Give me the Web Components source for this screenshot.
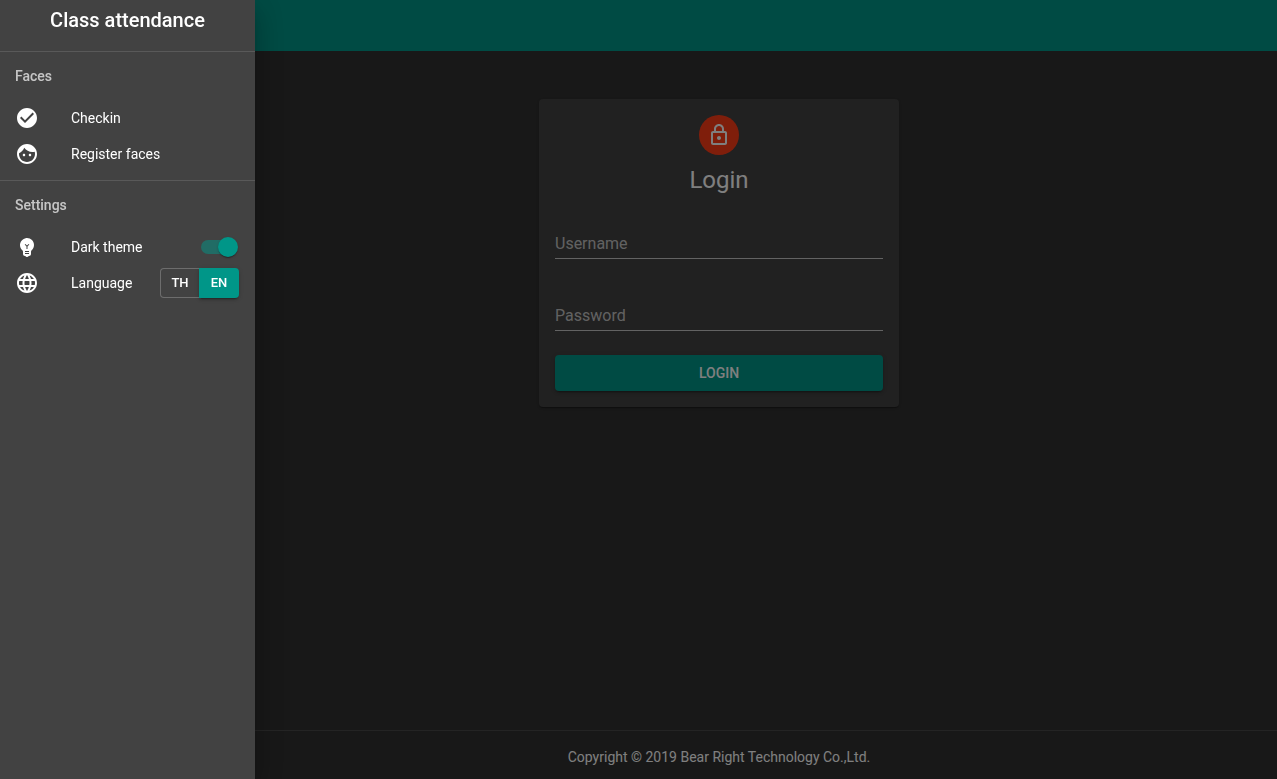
<!DOCTYPE html>
<html lang="en">
<head>
<meta charset="utf-8">
<meta name="viewport" content="width=device-width, initial-scale=1">
<title>Class attendance</title>
<style>
  html { height: 100%; }
  body {
    margin: 0;
    min-height: 100%;
    background: #303030;
    color: #fff;
    font: 400 14px/20px Roboto, "Liberation Sans", sans-serif;
    --primary: #009688;
    --paper: #424242;
    --muted: rgba(255, 255, 255, .7);
    --divider: rgba(255, 255, 255, .12);
  }
</style>
</head>
<body>
<attendance-app></attendance-app>

<script>
const define = (name, html, setup) => {
  const template = document.createElement('template');
  template.innerHTML = html;
  customElements.define(name, class extends HTMLElement {
    constructor() {
      super();
      this.attachShadow({ mode: 'open' }).append(template.content.cloneNode(true));
    }
    connectedCallback() { if (setup) setup(this, this.shadowRoot); }
  });
};

const ICONS = {
  check: 'M12 2C6.48 2 2 6.48 2 12s4.48 10 10 10 10-4.48 10-10S17.52 2 12 2zm-2 15l-5-5 1.41-1.41L10 14.17l7.59-7.59L19 8l-9 9z',
  face: 'M9 11.75c-.69 0-1.25.56-1.25 1.25s.56 1.25 1.25 1.25 1.25-.56 1.25-1.25-.56-1.25-1.25-1.25zm6 0c-.69 0-1.25.56-1.25 1.25s.56 1.25 1.25 1.25 1.25-.56 1.25-1.25-.56-1.25-1.25-1.25zM12 2C6.48 2 2 6.48 2 12s4.48 10 10 10 10-4.48 10-10S17.52 2 12 2zm0 18c-4.41 0-8-3.59-8-8 0-.29.02-.58.05-.86 2.36-1.05 4.23-2.98 5.21-5.37C11.07 8.33 14.05 10 17.42 10c.78 0 1.53-.09 2.25-.26.21.71.33 1.47.33 2.26 0 4.41-3.59 8-8 8z',
  bulb: 'M12 3c-.46 0-.93.04-1.4.14-2.76.53-4.96 2.76-5.48 5.52-.48 2.61.48 5.01 2.22 6.56.43.38.66.91.66 1.47V19c0 1.1.9 2 2 2h.28c.35.6.98 1 1.72 1s1.38-.4 1.72-1H14c1.1 0 2-.9 2-2v-2.31c0-.55.22-1.09.64-1.46C18.09 13.95 19 12.08 19 10c0-3.87-3.13-7-7-7zm2 16h-4v-1h4v1zm0-2h-4v-1h4v1zm-1.5-5.59V14h-1v-2.59L9.67 9.59l.71-.71L12 10.5l1.62-1.62.71.71-1.83 1.82z',
  globe: 'M11.99 2C6.47 2 2 6.48 2 12s4.47 10 9.99 10C17.52 22 22 17.52 22 12S17.52 2 11.99 2zm6.93 6h-2.95c-.32-1.25-.78-2.45-1.38-3.56 1.84.63 3.37 1.91 4.33 3.56zM12 4.04c.83 1.2 1.48 2.53 1.91 3.96h-3.82c.43-1.43 1.08-2.76 1.91-3.96zM4.26 14C4.1 13.36 4 12.69 4 12s.1-1.36.26-2h3.38c-.08.66-.14 1.32-.14 2 0 .68.06 1.34.14 2H4.26zm.82 2h2.95c.32 1.25.78 2.45 1.38 3.56-1.84-.63-3.37-1.9-4.33-3.56zm2.95-8H5.08c.96-1.66 2.49-2.93 4.33-3.56C8.81 5.55 8.35 6.75 8.03 8zM12 19.96c-.83-1.2-1.48-2.53-1.91-3.96h3.82c-.43 1.43-1.08 2.76-1.91 3.96zM14.34 14H9.66c-.09-.66-.16-1.32-.16-2 0-.68.07-1.35.16-2h4.68c.09.65.16 1.32.16 2 0 .68-.07 1.34-.16 2zm.25 5.56c.6-1.11 1.06-2.31 1.38-3.56h2.95c-.96 1.65-2.49 2.93-4.33 3.56zM16.36 14c.08-.66.14-1.32.14-2 0-.68-.06-1.34-.14-2h3.38c.16.64.26 1.31.26 2s-.1 1.36-.26 2h-3.38z',
  lock: 'M12 17c1.1 0 2-.9 2-2s-.9-2-2-2-2 .9-2 2 .9 2 2 2zm6-9h-1V6c0-2.76-2.24-5-5-5S7 3.24 7 6v2H6c-1.1 0-2 .9-2 2v10c0 1.1.9 2 2 2h12c1.1 0 2-.9 2-2V10c0-1.1-.9-2-2-2zM9 6c0-1.66 1.34-3 3-3s3 1.34 3 3v2H9V6zm9 14H6V10h12v10z'
};

define('md-icon', `
  <style>
    :host { display: block; width: 24px; height: 24px; flex: none; }
    svg { display: block; width: 100%; height: 100%; fill: currentColor; }
  </style>
  <svg viewBox="0 0 24 24" aria-hidden="true"><path/></svg>
`, (host, root) => root.querySelector('path').setAttribute('d', ICONS[host.getAttribute('name')] || ''));

// A titled group of drawer rows
define('drawer-section', `
  <style>
    :host { display: block; border-top: 1px solid var(--divider); padding-bottom: 8px; }
    h2 { margin: 0; padding: 0 15px; font-size: 14px; line-height: 48px; font-weight: 500; color: var(--muted); }
  </style>
  <h2></h2>
  <slot></slot>
`, (host, root) => { root.querySelector('h2').textContent = host.getAttribute('heading'); });

// Row with an icon and a label, plus an optional trailing control
define('drawer-item', `
  <style>
    :host { display: block; }
    .row { display: flex; align-items: center; height: 36px; padding: 0 16px 0 15px; color: inherit; text-decoration: none; }
    .text { flex: 1; margin-left: 32px; }
  </style>
  <div class="row"><md-icon></md-icon><span class="text"><slot></slot></span><slot name="action"></slot></div>
`, (host, root) => {
  const icon = document.createElement('md-icon');
  icon.setAttribute('name', host.getAttribute('icon'));
  root.querySelector('md-icon').replaceWith(icon);
  if (host.hasAttribute('href')) {
    const row = root.querySelector('.row');
    const link = document.createElement('a');
    link.className = 'row';
    link.href = host.getAttribute('href');
    link.append(...row.childNodes);
    row.replaceWith(link);
  }
});

define('theme-switch', `
  <style>
    :host { display: grid; align-items: center; margin-right: 1px; }
    .track, input { grid-area: 1 / 1; }
    .track { width: 34px; height: 14px; border-radius: 7px; background: var(--primary); opacity: .5; }
    input {
      appearance: none; display: flex; align-items: center; justify-content: flex-end; z-index: 1;
      width: 37px; height: 20px; margin: 0; cursor: pointer;
    }
    input:not(:checked) { justify-content: flex-start; }
    input::before {
      content: ""; width: 20px; height: 20px; border-radius: 50%; background: var(--primary);
      box-shadow: 0 2px 1px -1px rgba(0,0,0,.2), 0 1px 1px rgba(0,0,0,.14), 0 1px 3px rgba(0,0,0,.12);
    }
  </style>
  <span class="track"></span>
  <input type="checkbox" role="switch" checked aria-label="Dark theme">
`);

define('language-toggle', `
  <style>
    :host { display: flex; }
    button {
      box-sizing: border-box; height: 30px; margin: 0; padding: 0; width: 39px;
      font: 500 13px/20px Roboto, "Liberation Sans", sans-serif; color: #fff;
      background: none; border: 1px solid rgba(255, 255, 255, .23); border-right: 0;
      border-radius: 4px 0 0 4px; cursor: pointer;
    }
    button[aria-pressed=true] {
      width: 40px; background: var(--primary); border: 0; border-radius: 0 4px 4px 0;
      box-shadow: 0 3px 1px -2px rgba(0,0,0,.2), 0 2px 2px rgba(0,0,0,.14), 0 1px 5px rgba(0,0,0,.12);
    }
  </style>
  <button type="button" aria-pressed="false">TH</button><button type="button" aria-pressed="true">EN</button>
`);

define('app-drawer', `
  <style>
    :host {
      position: fixed; inset: 0 auto 0 0; z-index: 3; width: 255px; overflow-y: auto; background: var(--paper);
      box-shadow: 0 8px 10px -5px rgba(0,0,0,.2), 0 16px 24px 2px rgba(0,0,0,.14), 0 6px 30px 5px rgba(0,0,0,.12);
    }
    h1 { margin: 0; padding: 4px 0 15px; text-align: center; font-size: 20px; line-height: 32px; font-weight: 500; }
  </style>
  <h1>Class attendance</h1>
  <nav>
    <drawer-section heading="Faces">
      <drawer-item icon="check" href="#checkin">Checkin</drawer-item>
      <drawer-item icon="face" href="#register">Register faces</drawer-item>
    </drawer-section>
    <drawer-section heading="Settings">
      <drawer-item icon="bulb">Dark theme<theme-switch slot="action"></theme-switch></drawer-item>
      <drawer-item icon="globe">Language<language-toggle slot="action"></language-toggle></drawer-item>
    </drawer-section>
  </nav>
`);

define('text-field', `
  <style>
    :host { display: grid; }
    label, input { grid-area: 1 / 1; font-size: 16px; line-height: 30px; padding: 2px 0 0; }
    label { color: var(--muted); pointer-events: none; }
    input {
      box-sizing: border-box; width: 100%; height: 32px; margin: 0;
      font-family: inherit; color: #fff; background: none;
      border: 0; border-bottom: 1px solid var(--muted); border-radius: 0; outline: none;
    }
  </style>
  <label for="field"></label>
  <input id="field">
`, (host, root) => {
  root.querySelector('label').textContent = host.getAttribute('label');
  root.querySelector('input').type = host.getAttribute('type') || 'text';
});

define('login-card', `
  <style>
    :host {
      display: block; box-sizing: border-box; width: 100%; max-width: 360px; padding: 16px;
      background: var(--paper); border-radius: 4px;
      box-shadow: 0 2px 1px -1px rgba(0,0,0,.2), 0 1px 1px rgba(0,0,0,.14), 0 1px 3px rgba(0,0,0,.12);
    }
    header { display: flex; flex-direction: column; align-items: center; gap: 8px; }
    .avatar { display: grid; place-items: center; width: 40px; height: 40px; border-radius: 50%; background: #ff3d17; }
    h2 { margin: 0; font-size: 24px; line-height: 34px; font-weight: 400; }
    form { display: flex; flex-direction: column; margin-top: 30px; }
    text-field + text-field { margin-top: 40px; }
    button {
      height: 36px; margin: 24px 0 0; padding: 0 16px; border: 0; border-radius: 4px; cursor: pointer;
      font: 500 14px/24px Roboto, "Liberation Sans", sans-serif; color: #fff; background: var(--primary);
      box-shadow: 0 3px 1px -2px rgba(0,0,0,.2), 0 2px 2px rgba(0,0,0,.14), 0 1px 5px rgba(0,0,0,.12);
    }
  </style>
  <header>
    <span class="avatar"><md-icon name="lock"></md-icon></span>
    <h2>Login</h2>
  </header>
  <form>
    <text-field label="Username"></text-field>
    <text-field label="Password" type="password"></text-field>
    <button type="button">LOGIN</button>
  </form>
`);

define('attendance-app', `
  <style>
    :host { display: flex; flex-direction: column; min-height: 100vh; }
    .bar { height: 51px; background: var(--primary); }
    main { flex: 1; display: flex; justify-content: center; align-items: flex-start; padding: 48px 0 48px 161px; }
    footer { border-top: 1px solid var(--divider); padding: 16px 0 12px 161px; text-align: center; }
    .backdrop { position: fixed; inset: 0; z-index: 2; background: rgba(0, 0, 0, .5); }
  </style>
  <header class="bar"></header>
  <main><login-card></login-card></main>
  <footer>Copyright © 2019 Bear Right Technology Co.,Ltd.</footer>
  <div class="backdrop"></div>
  <app-drawer></app-drawer>
`);
</script>
</body>
</html>
